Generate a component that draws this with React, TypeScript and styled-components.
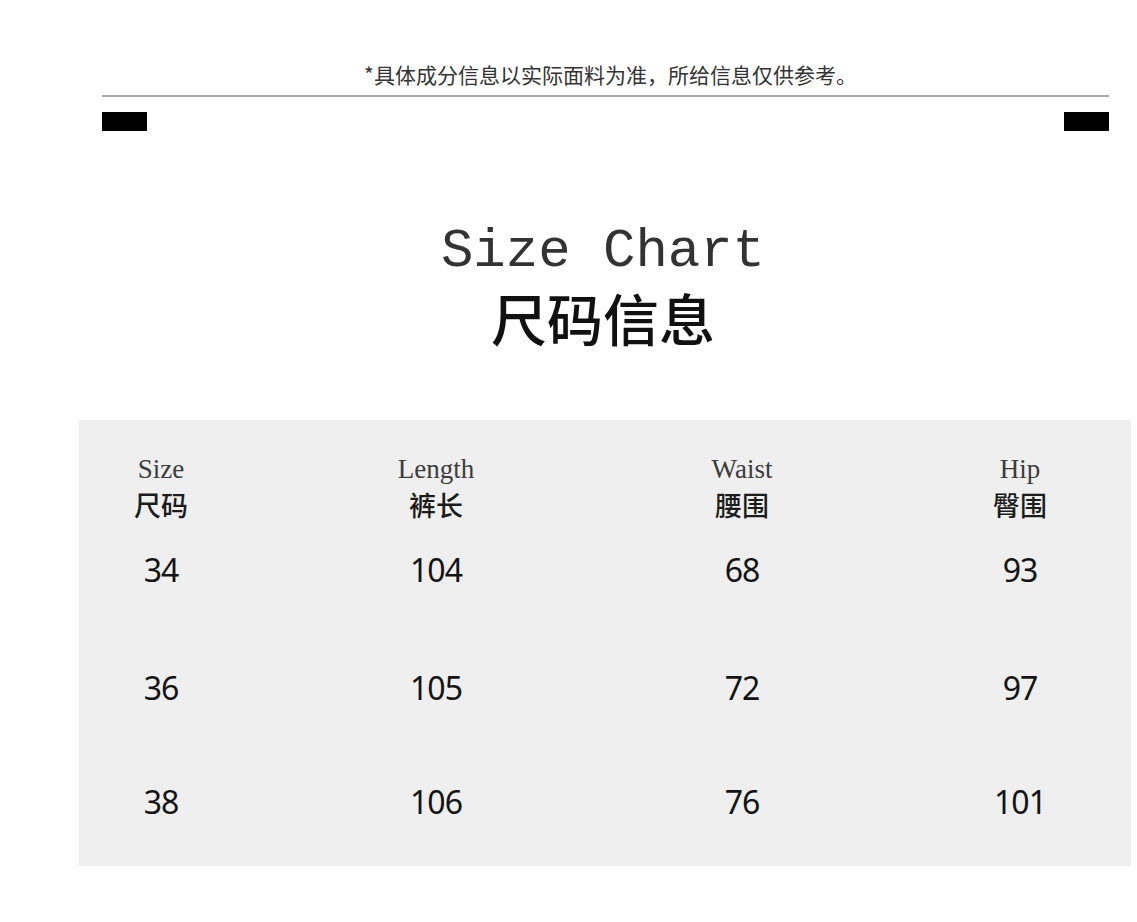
import React from "react";
import styled, { createGlobalStyle } from "styled-components";

const GlobalStyle = createGlobalStyle`
  html, body {
    margin: 0;
    padding: 0;
    background: #ffffff;
  }
  body {
    font-family: "Noto Sans", "Noto Sans CJK SC", sans-serif;
  }
`;

const Page = styled.div`
  width: 1137px;
  min-height: 922px;
  background: #ffffff;
  display: flex;
  flex-direction: column;
`;

const Top = styled.div`
  margin: 59px 28px 0 102px;
  display: flex;
  flex-direction: column;
`;

const Notice = styled.div`
  font-family: "Noto Sans CJK SC", sans-serif;
  font-size: 21px;
  line-height: 30px;
  color: #333333;
  text-align: center;
  padding-left: 10px;
`;

const Rule = styled.div`
  margin-top: 6px;
  height: 2px;
  background: #a9a9a9;
`;

const Marks = styled.div`
  margin-top: 15px;
  display: flex;
  justify-content: space-between;
`;

const Mark = styled.span`
  width: 45px;
  height: 19px;
  background: #000000;
`;

const Heading = styled.div`
  margin-top: 91px;
  display: flex;
  flex-direction: column;
  align-items: center;
  padding-left: 69px;
`;

const TitleEn = styled.h1`
  margin: 0;
  font-family: "Liberation Mono", "Courier New", monospace;
  font-weight: normal;
  font-size: 54px;
  line-height: 60px;
  color: #333333;
`;

const TitleCn = styled.h2`
  margin: 3px 0 0;
  font-family: "Noto Sans CJK SC", sans-serif;
  font-weight: 500;
  font-size: 56px;
  line-height: 64px;
  color: #111111;
`;

const Panel = styled.div`
  margin: 71px 0 0 79px;
  width: 1052px;
  background: #efefef;
  padding: 34px 0 44px;
  box-sizing: border-box;
  display: flex;
  flex-direction: column;
`;

const Row = styled.div<{ $top: number }>`
  display: grid;
  grid-template-columns: 164px 386px 226px 1fr;
  margin-top: ${(p) => p.$top}px;
`;

const Cell = styled.div`
  display: flex;
  flex-direction: column;
  align-items: center;
  &:nth-child(4) {
    padding-left: 54px;
  }
`;

const LabelEn = styled.span`
  font-family: "Liberation Serif", "Times New Roman", serif;
  font-size: 27px;
  line-height: 30px;
  color: #3c3c3c;
`;

const LabelCn = styled.span`
  margin-top: 2.5px;
  font-family: "Noto Sans CJK SC", sans-serif;
  font-weight: 500;
  font-size: 27px;
  line-height: 36px;
  color: #1c1c1c;
`;

const Value = styled.span`
  font-family: "Noto Sans", "Open Sans", sans-serif;
  font-size: 32px;
  line-height: 40px;
  letter-spacing: -1px;
  color: #141414;
`;

const headers = [
  { en: "Size", cn: "尺码" },
  { en: "Length", cn: "裤长" },
  { en: "Waist", cn: "腰围" },
  { en: "Hip", cn: "臀围" },
];

const rows = [
  { top: 27, values: ["34", "104", "68", "93"] },
  { top: 78, values: ["36", "105", "72", "97"] },
  { top: 74, values: ["38", "106", "76", "101"] },
];

const App = () => {
  return (
    <Page>
      <GlobalStyle />
      <Top>
        <Notice>*具体成分信息以实际面料为准，所给信息仅供参考。</Notice>
        <Rule />
        <Marks>
          <Mark />
          <Mark />
        </Marks>
      </Top>

      <Heading>
        <TitleEn>Size Chart</TitleEn>
        <TitleCn>尺码信息</TitleCn>
      </Heading>

      <Panel>
        <Row $top={0}>
          {headers.map((h) => (
            <Cell key={h.en}>
              <LabelEn>{h.en}</LabelEn>
              <LabelCn>{h.cn}</LabelCn>
            </Cell>
          ))}
        </Row>
        {rows.map((r) => (
          <Row $top={r.top} key={r.values[0]}>
            {r.values.map((v, i) => (
              <Cell key={i}>
                <Value>{v}</Value>
              </Cell>
            ))}
          </Row>
        ))}
      </Panel>
    </Page>
  );
};

export default App;
